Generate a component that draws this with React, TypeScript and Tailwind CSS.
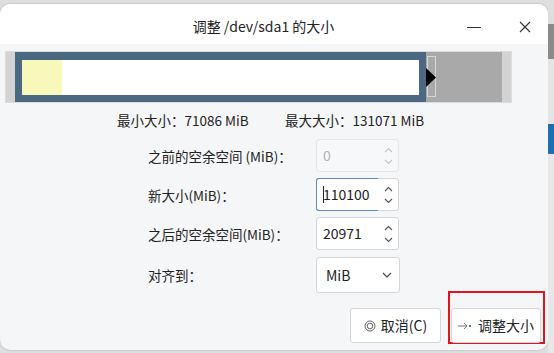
import React from 'react';

const font = { fontFamily: '"Noto Sans CJK SC", "Noto Sans", sans-serif' };

const Chevrons = ({ faded }: { faded?: boolean }) => (
  <div className={`flex w-[20px] flex-col items-center justify-center gap-[6px] ${faded ? 'text-[#c4c8cd]' : 'text-[#555]'}`}>
    <svg width="9" height="6" viewBox="0 0 9 6"><path d="M1 5 L4.5 1.5 L8 5" fill="none" stroke="currentColor" strokeWidth="1.1" /></svg>
    <svg width="9" height="6" viewBox="0 0 9 6"><path d="M1 1 L4.5 4.5 L8 1" fill="none" stroke="currentColor" strokeWidth="1.1" /></svg>
  </div>
);

const SpinBox = ({ value, disabled, focused }: { value: string; disabled?: boolean; focused?: boolean }) => (
  <div className={`flex h-[33px] w-[83px] rounded-[3px] border ${disabled ? 'border-[#e3e6ea] bg-[#f7f8f9]' : 'border-[#d3d7dc] bg-white'}`}>
    <div className={`flex flex-1 items-center pl-[6px] text-[14px] ${disabled ? 'text-[#b0b3b7]' : 'text-[#222]'} ${focused ? '-my-px -ml-px rounded-l-[3px] border border-r-0 border-[#5b8dd6]' : ''}`}>
      {focused && <span className="mr-[-1px] inline-block h-[17px] w-px bg-[#222]" />}
      {value}
    </div>
    <Chevrons faded={disabled} />
  </div>
);

const Row = ({ label, children }: { label: string; children: React.ReactNode }) => (
  <div className="flex items-center">
    <div className="w-[168px] text-[13.5px] text-[#222]">{label}</div>
    {children}
  </div>
);

export default function App() {
  return (
    <div className="flex h-[353px] w-[554px] overflow-hidden bg-[#dedede] pt-[4px]" style={font}>
      <div className="flex h-[346px] w-[548px] shrink-0 flex-col overflow-hidden rounded-[10px] bg-[#f5f6f8] shadow-[0_0_2px_rgba(0,0,0,0.25)] [&>*]:shrink-0">
        <div className="flex h-[40px] items-center bg-white pt-[5px]">
          <div className="flex-1 pl-[60px] text-center text-[14px] text-[#222]">调整 /dev/sda1 的大小</div>
          <div className="flex items-center gap-[38px] pr-[17px]">
            <svg width="14" height="14" viewBox="0 0 14 14"><path d="M0 7.5 H14" stroke="#333" strokeWidth="1" /></svg>
            <svg width="12" height="12" viewBox="0 0 12 12"><path d="M1 1 L11 11 M11 1 L1 11" stroke="#333" strokeWidth="1.1" /></svg>
          </div>
        </div>

        <div className="mx-[5px] mt-[7px] flex h-[52px] w-[507px] border border-[#dcdcdc] bg-[#d3d3d3]">
          <div className="w-[9px]" />
          <div className="flex w-[411px] bg-[#4a6882] px-[7px] pb-[7px] pt-[8px]">
            <div className="flex flex-1 bg-white">
              <div className="w-[40px] bg-[#f8f8bb]" />
            </div>
          </div>
          <div className="relative w-[76px] bg-[#a9a9a9]">
            <div className="absolute left-[1px] top-[4px] h-[41px] w-[9px] border border-[#d8d8d8]" />
            <svg className="absolute left-0 top-[16px]" width="10" height="19" viewBox="0 0 10 19"><path d="M0 0 L10 9.5 L0 19 Z" fill="#000" /></svg>
          </div>
        </div>

        <div className="mt-[7px] flex pl-[117px] text-[13.5px] text-[#222]">
          <span className="w-[168px]">最小大小：71086 MiB</span>
          <span>最大大小：131071 MiB</span>
        </div>

        <div className="mt-[9px] flex flex-col gap-[6px] pl-[148px]">
          <Row label="之前的空余空间 (MiB)："><SpinBox value="0" disabled /></Row>
          <Row label="新大小(MiB)："><SpinBox value="110100" focused /></Row>
          <Row label="之后的空余空间(MiB)："><SpinBox value="20971" /></Row>
          <div className="mt-[1px] flex items-center">
            <div className="w-[168px] text-[13.5px] text-[#222]">对齐到：</div>
            <div className="flex h-[36px] w-[84px] items-center justify-between rounded-[3px] border border-[#d3d7dc] bg-white pl-[9px] pr-[7px] text-[14px] text-[#222]">
              <span>MiB</span>
              <svg width="10" height="6" viewBox="0 0 10 6"><path d="M1 1 L5 5 L9 1" fill="none" stroke="#444" strokeWidth="1.2" /></svg>
            </div>
          </div>
        </div>

        <div className="mt-[-2px] flex justify-end pr-[3px]">
          <button className="mt-[17px] flex h-[35px] w-[91px] items-center justify-center gap-[5px] rounded-[3px] border border-[#d3d7dc] bg-white text-[14px] text-[#222]">
            <svg width="12" height="12" viewBox="0 0 12 12"><circle cx="6" cy="6" r="5" fill="none" stroke="#666" strokeWidth="1" /><circle cx="6" cy="6" r="2.8" fill="none" stroke="#666" strokeWidth="1" /></svg>
            <span>取消(C)</span>
          </button>
          <div className="ml-[7px] h-[53px] w-[97px] border-2 border-[#e0141e] pl-px pt-[15px]">
            <button className="flex h-[35px] w-[90px] items-center justify-center gap-[6px] rounded-[3px] border border-[#d3d7dc] bg-white text-[14px] text-[#222]">
              <svg width="14" height="8" viewBox="0 0 14 8"><path d="M0 4 H9 M6 1 L9 4 L6 7" fill="none" stroke="#777" strokeWidth="1" /><rect x="11" y="3" width="2" height="2" fill="#777" /></svg>
              <span>调整大小</span>
            </button>
          </div>
        </div>
      </div>
      <div className="flex w-[6px] flex-col">
        <div className="h-[20px] bg-[#dedede]" />
        <div className="h-[35px] bg-[#8a8a8a]" />
        <div className="h-[65px] bg-[#e4e4e4]" />
        <div className="h-[30px] bg-[#1c6fb4]" />
        <div className="flex-1 bg-[#e8e8e8]" />
      </div>
    </div>
  );
}
